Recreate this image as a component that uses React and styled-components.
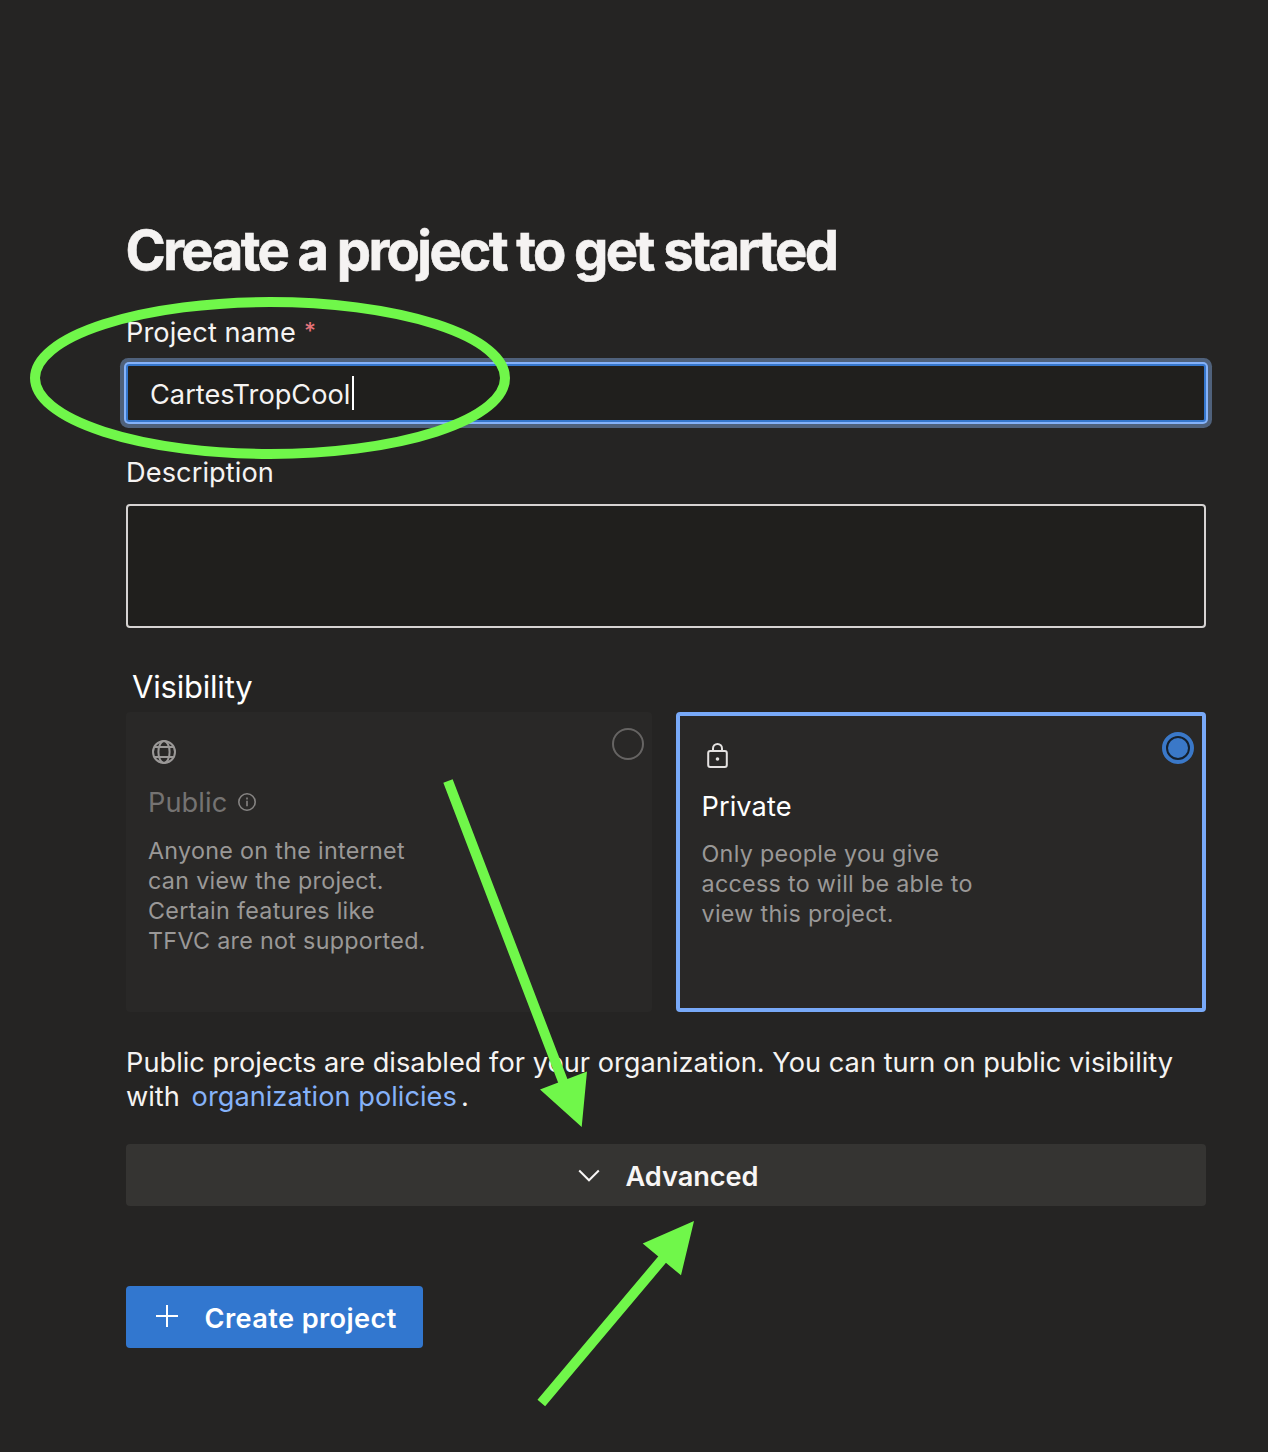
import React from "react";
import styled, { createGlobalStyle } from "styled-components";

const Global = createGlobalStyle`
  *, *::before, *::after { box-sizing: border-box; }
  body {
    margin: 0;
    background: #252423;
    color: #f5f3f2;
    font-family: "Inter", "Liberation Sans", sans-serif;
  }
`;

const Page = styled.main`
  position: relative;
  display: flex;
  flex-direction: column;
  align-items: stretch;
  width: 1268px;
  height: 1452px;
  padding: 218px 62px 0 126px;
  background: #252423;
  overflow: hidden;
`;

const Title = styled.h1`
  margin: 0 0 34px -0.5px;
  font-size: 54.4px;
  font-weight: 700;
  line-height: 64px;
  letter-spacing: -2.61px;
  white-space: nowrap;
  -webkit-text-stroke: 0.6px currentColor;
`;

const Label = styled.label`
  display: flex;
  margin-bottom: 14px;
  font-size: 27.2px;
  line-height: 34px;
  letter-spacing: 0.08px;
`;

const Required = styled.span`
  margin-left: 8px;
  color: #e5737a;
  font-size: 23px;
  font-weight: 500;
  line-height: 30px;
`;

const TextField = styled.div`
  display: flex;
  align-items: center;
  height: 58px;
  margin-bottom: 34px;
  padding: 2px 20px 0 22px;
  border: 2px solid #3576cb;
  border-radius: 3px;
  background: #201f1d;
  box-shadow: 0 0 0 2px #85b2f9, 0 0 0 6px #4f617b;
  font-size: 27.2px;
  letter-spacing: 0;
`;

const Caret = styled.span`
  width: 2px;
  height: 34px;
  margin: -2px 0 0 2px;
  background: #ffffff;
`;

const TextArea = styled.div`
  height: 124px;
  margin-bottom: 40px;
  border: 2px solid #d6d3d2;
  border-radius: 4px;
  background: #201f1d;
`;

const SectionTitle = styled.h2`
  margin: 0 0 6px;
  padding-left: 6px;
  font-size: 31px;
  font-weight: 400;
  line-height: 38px;
  letter-spacing: -0.2px;
  color: #ffffff;
`;

const Cards = styled.div`
  display: grid;
  grid-template-columns: 526px 530px;
  column-gap: 24px;
  height: 300px;
  margin-bottom: 34px;
`;

const Card = styled.section`
  padding: 16px 8px 0 ${(p) => (p.$selected ? "21.5px" : "22px")};
  border: ${(p) => (p.$selected ? "4px solid #78a9f8" : "0")};
  border-radius: 4px;
  background: #292827;
`;

const CardHead = styled.div`
  display: flex;
  justify-content: space-between;
  align-items: flex-start;
  height: 58px;
`;

const CardIcon = styled.svg`
  width: 32px;
  height: 32px;
  margin-top: 8px;
  fill: none;
  stroke: ${(p) => p.$color};
  stroke-width: 2;
`;

const Radio = styled.span`
  display: grid;
  place-items: center;
  width: 32px;
  height: 32px;
  border: ${(p) => (p.$checked ? "4px solid #3a78c8" : "2px solid #666463")};
  border-radius: 50%;
  background: ${(p) => (p.$checked ? "#14202e" : "transparent")};
`;

const RadioDot = styled.span`
  width: 20px;
  height: 20px;
  border-radius: 50%;
  background: #3a78c8;
`;

const CardTitle = styled.h3`
  display: flex;
  align-items: center;
  gap: 10px;
  margin: 0 0 ${(p) => (p.$muted ? "16px" : "15px")};
  color: ${(p) => (p.$muted ? "#757372" : "#ffffff")};
  font-size: 27.2px;
  font-weight: 400;
  line-height: 34px;
  letter-spacing: 0.08px;
`;

const InfoIcon = styled.svg`
  width: 20px;
  height: 20px;
  margin-top: -2px;
  fill: none;
  stroke: #858382;
  stroke-width: 1.6;
`;

const CardText = styled.p`
  margin: 0;
  color: #9a9897;
  font-size: 23.3px;
  line-height: 30px;
  letter-spacing: 0.3px;
  white-space: pre-line;
`;

const Notice = styled.p`
  margin: 0 0 30px;
  font-size: 27.2px;
  line-height: 34px;
  letter-spacing: 0.02px;
`;

const Link = styled.a`
  padding: 0 4px;
  color: #85b2f9;
  letter-spacing: 0.02px;
`;

const Button = styled.button`
  display: flex;
  align-items: center;
  height: 62px;
  padding: 0;
  border: 0;
  border-radius: 4px;
  font-family: inherit;
  font-size: 27.2px;
  font-weight: 600;
  line-height: 34px;
`;

const AdvancedButton = styled(Button)`
  justify-content: center;
  gap: 21px;
  padding-left: 1px;
  margin-bottom: 80px;
  background: #353432;
  color: #f8f6f5;
  letter-spacing: -0.05px;
`;

const CreateButton = styled(Button)`
  gap: 22.5px;
  width: 297px;
  padding-left: 26px;
  background: #3277cf;
  color: #ffffff;
  letter-spacing: 0.39px;
`;

const ButtonText = styled.span`
  padding-top: 4px;
`;

const ButtonIcon = styled.svg`
  width: 30px;
  height: 30px;
  fill: none;
  stroke: currentColor;
  stroke-width: 2;
`;

const Annotations = styled.svg`
  position: absolute;
  inset: 0;
  width: 1268px;
  height: 1452px;
  pointer-events: none;
  fill: none;
  stroke: #70f74a;
  stroke-width: 10;
`;

export default function App() {
  return (
    <Page>
      <Global />
      <Title>Create a project to get started</Title>

      <Label>
        Project name<Required>*</Required>
      </Label>
      <TextField>
        CartesTropCool
        <Caret />
      </TextField>

      <Label>Description</Label>
      <TextArea />

      <SectionTitle>Visibility</SectionTitle>
      <Cards>
        <Card>
          <CardHead>
            <CardIcon viewBox="0 0 32 32" $color="#9a9897">
              <circle cx="16" cy="16" r="11" />
              <ellipse cx="16" cy="16" rx="5.6" ry="11" />
              <path d="M6 11h20M6 21h20" />
            </CardIcon>
            <Radio />
          </CardHead>
          <CardTitle $muted>
            Public
            <InfoIcon viewBox="0 0 20 20">
              <circle cx="10" cy="10" r="8.2" />
              <path d="M10 8.8v5.4M10 5.4v2" />
            </InfoIcon>
          </CardTitle>
          <CardText>
            {"Anyone on the internet\ncan view the project.\nCertain features like\nTFVC are not supported."}
          </CardText>
        </Card>

        <Card $selected>
          <CardHead>
            <CardIcon viewBox="0 0 32 32" $color="#e4e2e1">
              <rect x="6.2" y="11" width="18.6" height="16" rx="2" />
              <path d="M11 11V8.4a4.5 4.5 0 0 1 9 0V11" />
              <circle cx="15.5" cy="19" r="1.8" fill="#e4e2e1" stroke="none" />
            </CardIcon>
            <Radio $checked>
              <RadioDot />
            </Radio>
          </CardHead>
          <CardTitle>Private</CardTitle>
          <CardText>
            {"Only people you give\naccess to will be able to\nview this project."}
          </CardText>
        </Card>
      </Cards>

      <Notice>
        Public projects are disabled for your organization. You can turn on public visibility
        <br />
        with <Link>organization policies</Link>.
      </Notice>

      <AdvancedButton>
        <ButtonIcon viewBox="0 0 30 30">
          <path d="M5.2 10.5l9.8 9.8 9.8-9.8" />
        </ButtonIcon>
        <ButtonText>Advanced</ButtonText>
      </AdvancedButton>

      <CreateButton>
        <ButtonIcon viewBox="0 0 30 30">
          <path d="M15 3v22M4 14h22" />
        </ButtonIcon>
        <ButtonText>Create project</ButtonText>
      </CreateButton>

      <Annotations viewBox="0 0 1268 1452">
        <ellipse cx="270" cy="378" rx="235" ry="76" />
        <path d="M448 781L564 1084M541.3 1403L666 1255" />
        <path d="M581.7 1127L540 1089.5L587 1071.5ZM694 1221L642.7 1243.5L681 1275.3Z" fill="#70f74a" stroke="none" />
      </Annotations>
    </Page>
  );
}
